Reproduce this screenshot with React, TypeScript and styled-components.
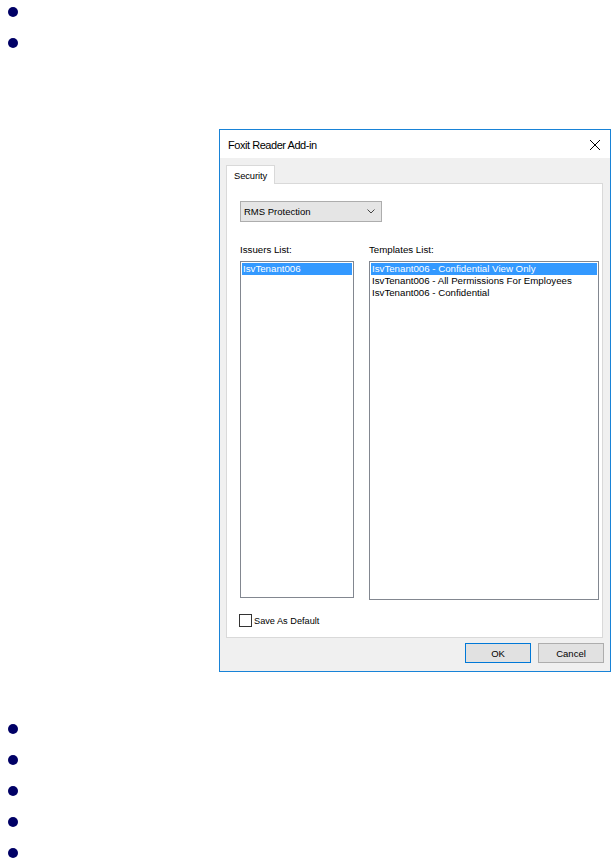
import React from "react";
import styled, { createGlobalStyle } from "styled-components";

const GlobalStyle = createGlobalStyle`
  html, body {
    margin: 0;
    padding: 0;
    background: #ffffff;
  }
  body {
    font-family: "Liberation Sans", Arial, sans-serif;
    color: #000000;
  }
`;

const Page = styled.div`
  width: 612px;
  height: 861px;
  overflow: hidden;
  display: flex;
  flex-direction: column;

  & > * {
    flex-shrink: 0;
  }
`;

const BulletList = styled.ul`
  list-style: none;
  margin: ${(p: { $top?: number }) => p.$top ?? 0}px 0 0 0;
  padding: 0;
`;

const BulletRow = styled.li`
  height: 31px;
  display: flex;
  align-items: flex-start;
  padding-left: 8px;
`;

const Bullet = styled.span`
  width: 10px;
  height: 10px;
  margin-top: 7px;
  border-radius: 50%;
  background: #000066;
`;

const Dialog = styled.div`
  box-sizing: border-box;
  margin: 67px 0 0 219px;
  width: 392px;
  height: 543px;
  border: 1px solid #1883d7;
  background: #f0f0f0;
  display: flex;
  flex-direction: column;
`;

const TitleBar = styled.div`
  height: 28px;
  flex-shrink: 0;
  background: #ffffff;
  display: flex;
  align-items: center;
  justify-content: space-between;
  padding: 0 8px 0 8px;
`;

const Title = styled.span`
  font-size: 11px;
  letter-spacing: -0.45px;
  color: #000000;
  padding-top: 1px;
`;

const CloseButton = styled.span`
  width: 12px;
  height: 12px;
  display: flex;
  margin-right: 1px;
  margin-top: 1px;
`;

const Body = styled.div`
  flex: 1;
  display: flex;
  flex-direction: column;
  padding: 7px 6px 0 6px;
`;

const TabStrip = styled.div`
  display: flex;
  height: 18px;
  flex-shrink: 0;
`;

const Tab = styled.div`
  box-sizing: border-box;
  width: 49px;
  height: 19px;
  background: #ffffff;
  border: 1px solid #d9d9d9;
  border-bottom: none;
  font-size: 9.4px;
  letter-spacing: -0.1px;
  display: flex;
  align-items: center;
  padding-left: 7px;
  position: relative;
  z-index: 1;
`;

const Panel = styled.div`
  box-sizing: border-box;
  flex-shrink: 0;
  width: 377px;
  height: 455px;
  background: #ffffff;
  border: 1px solid #d9d9d9;
  padding: 17px 0 0 13px;
  display: flex;
  flex-direction: column;
`;

const Select = styled.div`
  box-sizing: border-box;
  width: 142px;
  height: 21px;
  background: #e5e5e5;
  border: 1px solid #adadad;
  display: flex;
  align-items: center;
  justify-content: space-between;
  padding: 0 6px 0 3px;
  font-size: 9.5px;
`;

const Lists = styled.div`
  display: grid;
  grid-template-columns: 114px 230px;
  column-gap: 15px;
  row-gap: 5px;
  margin-top: 22px;
  align-items: start;
`;

const ListLabel = styled.div`
  font-size: 9.7px;
  line-height: 12px;
  height: 12px;
`;

const ListBox = styled.div<{ $height: number }>`
  box-sizing: border-box;
  height: ${(p) => p.$height}px;
  border: 1px solid #828790;
  background: #ffffff;
  padding: 1px;
`;

const ListItem = styled.div<{ $selected?: boolean }>`
  height: 12px;
  line-height: 12px;
  font-size: 9.7px;
  padding-left: 1px;
  white-space: nowrap;
  overflow: hidden;
  background: ${(p) => (p.$selected ? "#3399ff" : "transparent")};
  color: ${(p) => (p.$selected ? "#ffffff" : "#000000")};
`;

const CheckRow = styled.label`
  display: flex;
  align-items: center;
  gap: 2px;
  margin: 14px 0 0 -1px;
  font-size: 9.2px;
`;

const CheckBox = styled.span`
  box-sizing: border-box;
  width: 13px;
  height: 13px;
  border: 1px solid #333333;
  background: #ffffff;
`;

const ButtonRow = styled.div`
  display: flex;
  justify-content: flex-end;
  gap: 7px;
  margin-top: 5px;
  flex-shrink: 0;
`;

const Button = styled.button<{ $default?: boolean }>`
  box-sizing: border-box;
  width: 66px;
  height: 20px;
  margin: 0;
  padding: 0;
  background: #e1e1e1;
  border: 1px solid ${(p) => (p.$default ? "#0078d7" : "#adadad")};
  font-family: "Liberation Sans", Arial, sans-serif;
  font-size: 9.5px;
  color: #000000;
`;

const Chevron = () => (
  <svg width="8" height="5" viewBox="0 0 8 5">
    <path d="M0.5 0.5 L4 4 L7.5 0.5" fill="none" stroke="#444" strokeWidth="1" />
  </svg>
);

const CloseIcon = () => (
  <svg width="12" height="12" viewBox="0 0 12 12">
    <path d="M1 1 L11 11 M11 1 L1 11" stroke="#000" strokeWidth="1" />
  </svg>
);

const templates = [
  "IsvTenant006 - Confidential View Only",
  "IsvTenant006 - All Permissions For Employees",
  "IsvTenant006 - Confidential",
];

const App = () => {
  return (
    <Page>
      <GlobalStyle />
      <BulletList>
        {[0, 1].map((i) => (
          <BulletRow key={i}>
            <Bullet />
          </BulletRow>
        ))}
      </BulletList>

      <Dialog>
        <TitleBar>
          <Title>Foxit Reader Add-in</Title>
          <CloseButton>
            <CloseIcon />
          </CloseButton>
        </TitleBar>
        <Body>
          <TabStrip>
            <Tab>Security</Tab>
          </TabStrip>
          <Panel>
            <Select>
              <span>RMS Protection</span>
              <Chevron />
            </Select>
            <Lists>
              <ListLabel>Issuers List:</ListLabel>
              <ListLabel>Templates List:</ListLabel>
              <ListBox $height={337}>
                <ListItem $selected>IsvTenant006</ListItem>
              </ListBox>
              <ListBox $height={339}>
                {templates.map((t, i) => (
                  <ListItem key={t} $selected={i === 0}>
                    {t}
                  </ListItem>
                ))}
              </ListBox>
            </Lists>
            <CheckRow>
              <CheckBox />
              Save As Default
            </CheckRow>
          </Panel>
          <ButtonRow>
            <Button $default>OK</Button>
            <Button>Cancel</Button>
          </ButtonRow>
        </Body>
      </Dialog>

      <BulletList $top={45}>
        {[0, 1, 2, 3, 4].map((i) => (
          <BulletRow key={i}>
            <Bullet />
          </BulletRow>
        ))}
      </BulletList>
    </Page>
  );
};

export default App;
